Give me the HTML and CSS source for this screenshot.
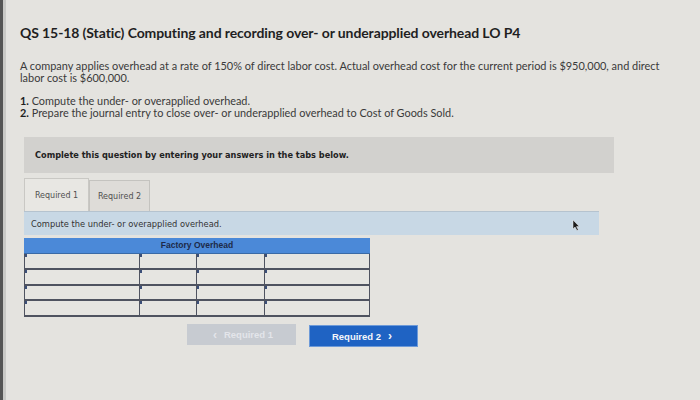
FILE: index.html
```html
<!DOCTYPE html>
<html>
<head>
<meta charset="utf-8">
<link rel="stylesheet" href="styles.css">
</head>
<body>
<div class="page">
  <h1 class="title">QS 15-18 (Static) Computing and recording over- or underapplied overhead LO P4</h1>
  <p class="para">A company applies overhead at a rate of 150% of direct labor cost. Actual overhead cost for the current period is $950,000, and direct labor cost is $600,000.</p>
  <ol class="tasks">
    <li><b>1.</b> Compute the under- or overapplied overhead.</li>
    <li><b>2.</b> Prepare the journal entry to close over- or underapplied overhead to Cost of Goods Sold.</li>
  </ol>
  <div class="notice">Complete this question by entering your answers in the tabs below.</div>
  <div class="tabs">
    <div class="tab active">Required 1</div>
    <div class="tab">Required 2</div>
  </div>
  <div class="instr">Compute the under- or overapplied overhead.
    <svg class="cursor" width="8" height="11" viewBox="0 0 8 11"><path d="M1 0 L1 9 L3 7 L5 10.5 L6.3 9.8 L4.5 6.6 L7.2 6.4 Z" fill="#1c1c1c" stroke="#f0f0f0" stroke-width="0.5"/></svg>
  </div>
  <div class="taccount">
    <div class="thead">Factory Overhead</div>
    <div class="tgrid">
      <div class="cell"></div><div class="cell"></div><div class="cell"></div><div class="cell"></div>
      <div class="cell"></div><div class="cell"></div><div class="cell"></div><div class="cell"></div>
      <div class="cell"></div><div class="cell"></div><div class="cell"></div><div class="cell"></div>
      <div class="cell"></div><div class="cell"></div><div class="cell"></div><div class="cell"></div>
    </div>
  </div>
  <div class="nav">
    <div class="btn prev"><span class="chev">&lsaquo;</span> Required 1</div>
    <div class="btn next">Required 2 <span class="chev">&rsaquo;</span></div>
  </div>
</div>
</body>
</html>
```
FILE: styles.css
```css
html, body {
  margin: 0;
  padding: 0;
}
body {
  width: 700px;
  height: 400px;
  background: #e4e3df;
  overflow: hidden;
  font-family: "Lato", "Open Sans", sans-serif;
  color: #2e2e2e;
}
.page {
  height: 400px;
  box-sizing: border-box;
  border-left: 3px solid #555555;
  box-shadow: inset 3px 0 0 #c9c9c6;
  padding: 24px 0 0 17px;
}
.title {
  margin: 0;
  font-size: 14px;
  line-height: 17px;
  font-weight: 700;
  color: #1f1f1f;
  letter-spacing: -0.1px;
}
.para {
  margin: 19px 0 0 0;
  width: 650px;
  font-size: 10.95px;
  line-height: 12px;
  color: #3a3a3a;
}
.tasks {
  list-style: none;
  margin: 11px 0 0 0;
  padding: 0;
  font-size: 10.9px;
  line-height: 12px;
  color: #3a3a3a;
}
.tasks b {
  color: #1f1f1f;
}
.notice {
  margin: 18px 0 0 4px;
  width: 590px;
  height: 36px;
  box-sizing: border-box;
  background: #d2d1ce;
  padding-left: 11px;
  display: flex;
  align-items: center;
  font-family: "DejaVu Sans", sans-serif;
  font-weight: 700;
  font-size: 8.2px;
  color: #222;
}
.tabs {
  display: flex;
  align-items: flex-end;
  margin: 5px 0 0 4px;
  height: 33px;
}
.tab {
  box-sizing: border-box;
  border: 1px solid #c4c3bf;
  border-bottom: none;
  background: #dddcd8;
  font-family: "DejaVu Sans", sans-serif;
  font-size: 8px;
  color: #505050;
  display: flex;
  align-items: center;
  justify-content: center;
}
.tab.active {
  width: 65px;
  height: 33px;
  background: #e8e7e3;
  border-color: #c9c8c4;
}
.tab:not(.active) {
  width: 61px;
  height: 31px;
  background: #dedcd8;
}
.instr {
  position: relative;
  margin-left: 4px;
  width: 575px;
  height: 24px;
  box-sizing: border-box;
  background: #c8d8e5;
  border-top: 1px solid #b5c3cf;
  padding-left: 7px;
  display: flex;
  align-items: center;
  font-family: "DejaVu Sans", sans-serif;
  font-size: 8.3px;
  color: #333;
}
.cursor {
  position: absolute;
  left: 548px;
  top: 8px;
}
.taccount {
  margin: 3px 0 0 4px;
  width: 346px;
}
.thead {
  height: 15px;
  background: #4b89d8;
  border-bottom: 1px solid #3a6aa6;
  text-align: center;
  font-family: "Liberation Sans", sans-serif;
  font-weight: 700;
  font-size: 8.5px;
  line-height: 15px;
  color: #1d2a48;
}
.tgrid {
  display: grid;
  grid-template-columns: 114px 56px 67px 1fr;
  border: 1px solid #4f5360;
  border-top: none;
  border-bottom-width: 2px;
  background: #4f5360;
  gap: 2px 1px;
}
.cell {
  height: 13.75px;
  background: #e6e5e1;
  position: relative;
}
.cell::before {
  content: "";
  position: absolute;
  left: 0;
  top: 0;
  width: 2px;
  height: 3px;
  background: #3c4f78;
}
.nav {
  display: flex;
  gap: 13px;
  margin: 7px 0 0 167px;
}
.btn {
  height: 21px;
  width: 109px;
  display: flex;
  align-items: center;
  justify-content: center;
  gap: 4px;
  font-family: "Liberation Sans", sans-serif;
  font-weight: 700;
  font-size: 9.5px;
}
.btn.prev {
  background: #c7cbd1;
  color: #e3e5ea;
}
.btn.next {
  background: #1f63c3;
  color: #f4f6fa;
  border: 1px solid #6d9ad8;
  box-sizing: border-box;
  height: 22px;
  margin-top: 1px;
}
.chev {
  font-size: 12px;
  font-weight: 700;
  line-height: 1;
  margin: 0 3px;
}
```
